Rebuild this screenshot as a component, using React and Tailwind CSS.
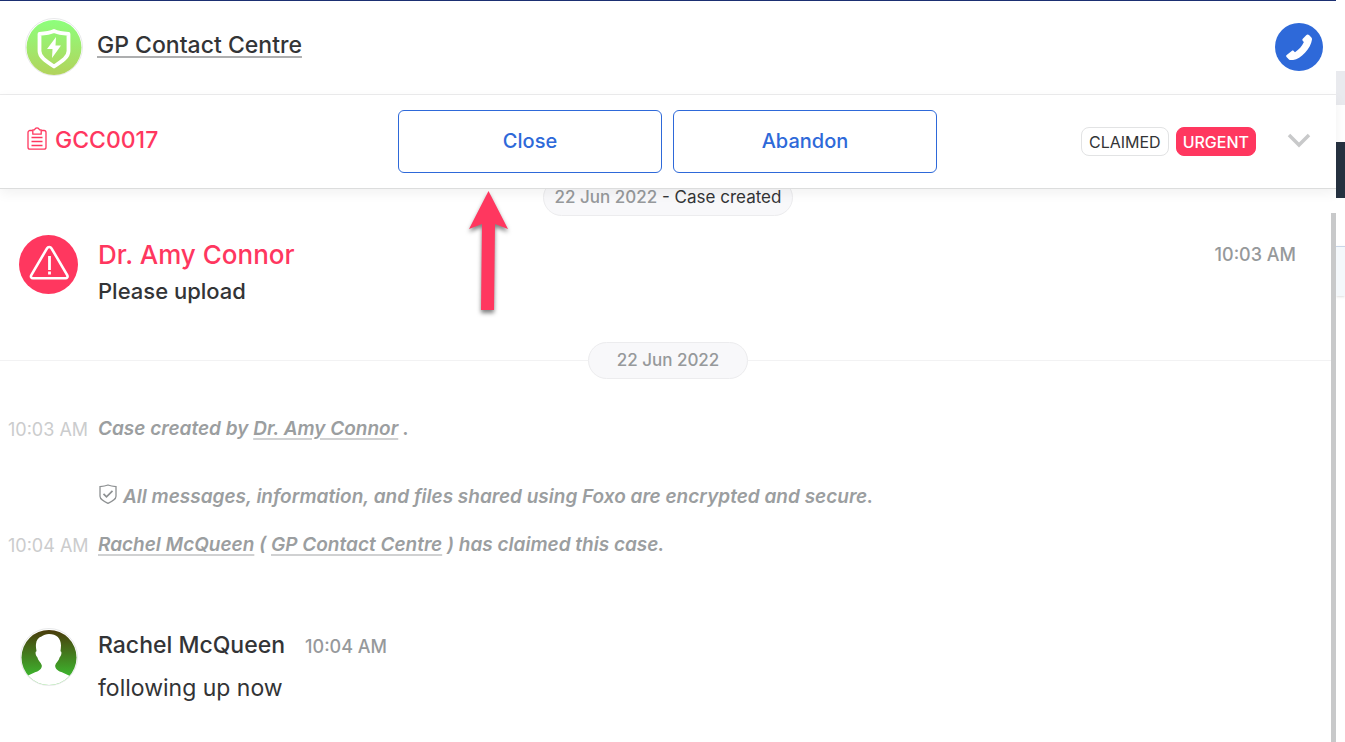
import React from "react";

const PINK = "#ff375f";

function TeamBadge() {
  return (
    <svg viewBox="0 0 58 58" className="size-[58px] shrink-0" aria-hidden="true">
      <defs>
        <linearGradient id="team" x1="0" y1="0" x2="0" y2="1">
          <stop offset="0" stopColor="#8dff7c" />
          <stop offset="1" stopColor="#b2d35c" />
        </linearGradient>
      </defs>
      <circle cx="29" cy="29" r="28.500" fill="#fff" stroke="#e8e9ea" />
      <circle cx="29" cy="29.500" r="27.500" fill="url(#team)" />
      <path
        d="M29 13c4.500 2 9.500 2.500 14.500 2.900V33c0 6-6 10-14.500 15.500C20.500 43 14.500 39 14.500 33V15.900c5-.4 10-.9 14.500-2.900z"
        fill="none"
        stroke="#fff"
        strokeWidth="3.800"
        strokeLinejoin="round"
      />
      <path d="M31 19l-9 12h5.500L27 40l9-12.500h-5.500z" fill="#fff" />
    </svg>
  );
}

function PhoneIcon() {
  return (
    <svg viewBox="0 0 48 48" className="size-12" aria-hidden="true">
      <path
        d="M31.200 12.200c.8-.9 1.900-1 2.800-.2l2.200 2.200c.6.600.9 1.400.8 2.300-.6 4.500-3 8.900-7 13.200-3.800 4-7.800 6.600-11.800 7.300-1.200.2-2.200.1-3.200-.1l-.8-.2-2.700-2.800c-.6-.6-.5-1.300.2-1.800l5-4.200c.7-.5 1.400-.5 2 .1l1.300 1.300c4-2.600 7-6.200 8.900-10.200l-1.100-1.200c-.6-.7-.6-1.400 0-2.100z"
        fill="#fff"
      />
    </svg>
  );
}

function ClipboardIcon() {
  return (
    <svg
      viewBox="0 0 20 23"
      className="mb-1 h-[23px] w-5 shrink-0"
      fill="none"
      stroke={PINK}
      strokeWidth="1.300"
      strokeLinejoin="round"
      aria-hidden="true"
    >
      <path d="M5.500 3.500H3A2 2 0 0 0 1 5.500v14.700a2 2 0 0 0 2 2h14a2 2 0 0 0 2-2V5.500a2 2 0 0 0-2-2h-2.500" />
      <path d="M5.800 2.800h1.700C8 1.500 8.900.8 10 .8s2 .7 2.500 2h1.700v4.400H5.800z" />
      <path d="M4.500 10.500h11M4.500 14.500h11M4.500 18.500h11" />
    </svg>
  );
}

function AlertAvatar() {
  return (
    <svg viewBox="0 0 59 59" className="size-[59px] shrink-0" aria-hidden="true">
      <circle cx="29.500" cy="29.500" r="29.500" fill={PINK} />
      <path
        d="M28 13.300L12.300 40.200c-.9 1.600 0 3 1.700 3h32.500c1.700 0 2.600-1.400 1.700-3L32.500 13.300c-1-1.800-3.500-1.800-4.500 0z"
        fill="none"
        stroke="#fff"
        strokeWidth="2.600"
        strokeLinejoin="round"
      />
      <path d="M30.500 21v14M30.500 36.500v3" stroke="#fff" strokeWidth="2.800" />
    </svg>
  );
}

function PersonAvatar() {
  return (
    <svg viewBox="0 0 58 58" className="size-[58px] shrink-0" aria-hidden="true">
      <defs>
        <linearGradient id="person" x1="0" y1="0" x2="0" y2="1">
          <stop offset="0" stopColor="#4a350a" />
          <stop offset="0.850" stopColor="#3db92f" />
          <stop offset="1" stopColor="#3dc433" />
        </linearGradient>
        <clipPath id="personClip">
          <circle cx="29" cy="29.500" r="27.500" />
        </clipPath>
      </defs>
      <circle cx="29" cy="29" r="28.500" fill="#fff" stroke="#e8e9ea" />
      <g clipPath="url(#personClip)">
        <rect width="58" height="58" fill="url(#person)" />
        <path
          d="M29 6c7.500 0 12 4.300 12 11.500 0 2-.4 4-.5 5.800 1.500.3 1.200 3.800-.8 6-.8 3.500-4 5.700-4.500 8.200-.3 3 3 5.500 6.200 6.600L50 48v11H7V48l8.600-3.900c3.200-1.100 6.500-3.600 6.200-6.600-.5-2.500-3.700-4.700-4.500-8.200-2-2.200-2.300-5.700-.8-6-.1-1.800-.9-4-.5-7.300.4-4 2.200-6.500 5.500-7.500C23.500 7 26 6 29 6z"
          fill="#fff"
        />
      </g>
    </svg>
  );
}

function ShieldCheck() {
  return (
    <svg
      viewBox="0 0 18 20"
      className="mr-1.5 ml-px inline-block h-5 w-[18px] align-[-1px]"
      fill="none"
      stroke="#8e9193"
      strokeWidth="1.300"
      aria-hidden="true"
    >
      <path d="M9 1c2.500 1 5 1.400 8 1.600v9.600c0 3-3.500 4.800-8 7.100-4.500-2.300-8-4.100-8-7.100V2.600C4 2.400 6.500 2 9 1z" />
      <path d="M4.500 9.800l3 3L13.500 6.800" strokeWidth="1.700" />
    </svg>
  );
}

function PointerArrow() {
  return (
    <svg
      viewBox="0 0 50 132"
      className="pointer-events-none absolute top-[79px] left-[65px] h-[132px] w-[50px]"
      aria-hidden="true"
    >
      <path
        d="M25.500 2L45 40l-13-5L31 121H18l1-86-13 5z"
        fill={PINK}
        style={{ filter: "drop-shadow(0 3px 2px rgba(0,0,0,0.5))" }}
      />
    </svg>
  );
}

function UserLink({ children }) {
  return (
    <a href="#" className="underline decoration-[#d0d1d2] decoration-2 underline-offset-3">
      {children}
    </a>
  );
}

function SystemMessage({ time, children }) {
  return (
    <div className="flex h-7 items-center">
      <time className="w-[98px] shrink-0 pl-2 text-[18px] text-[#cbcccd]">{time}</time>
      <p className="text-[19px] font-semibold text-[#9b9ea0] italic">{children}</p>
    </div>
  );
}

export default function App() {
  return (
    <div className="flex h-screen overflow-hidden bg-white font-['Inter','Liberation_Sans',sans-serif] text-[#333436]">
      <main className="flex min-w-0 flex-1 flex-col border-t border-[#1b2f72]">
        {/* Team header */}
        <header className="flex h-[94px] shrink-0 items-center justify-between border-b border-[#ececed] pr-[13px] pb-0.5 pl-[25px]">
          <div className="flex items-center gap-3.5">
            <TeamBadge />
            <h1 className="pb-0.5 text-[23px] font-medium">
              <a href="#" className="underline decoration-[#adaeaf] decoration-2 underline-offset-3">
                GP Contact Centre
              </a>
            </h1>
          </div>
          <button aria-label="Call" className="size-12 rounded-full bg-[#2e69d9]">
            <PhoneIcon />
          </button>
        </header>

        {/* Case bar */}
        <section className="relative z-10 grid h-[94px] shrink-0 grid-cols-[1fr_auto_1fr] items-center border-b border-[#dcdddd] bg-white pr-[25px] pl-6 shadow-[0_4px_12px_rgba(0,0,0,0.06)]">
          <h2 className="flex items-center gap-2 pb-0.5 pl-[3px] text-[23px] font-medium text-[#ff375f]">
            <ClipboardIcon />
            GCC0017
          </h2>
          <div className="relative flex gap-[11px] text-[20px] font-medium text-[#2e69d9]">
            <button className="h-[63px] w-[264px] rounded-md border border-[#2e69d9] pb-0.5">Close</button>
            <button className="h-[63px] w-[264px] rounded-md border border-[#2e69d9] pb-0.5">Abandon</button>
            <PointerArrow />
          </div>
          <div className="flex items-center justify-end text-[16px] leading-[25px]">
            <span className="mr-[7px] rounded-lg border border-[#e2e3e4] px-[7px] pt-0.5">CLAIMED</span>
            <span className="rounded-lg border border-[#ff375f] bg-[#ff375f] px-1.5 pt-0.5 font-medium text-white">
              URGENT
            </span>
            <button aria-label="Show case details" className="ml-[31px] pb-1">
              <svg viewBox="0 0 24 16" className="h-4 w-6" fill="none" stroke="#c8c9ca" strokeWidth="3.500">
                <path d="M2 3l10 10L22 3" />
              </svg>
            </button>
          </div>
        </section>

        {/* Conversation */}
        <section className="relative min-h-0 flex-1">
          <div className="-mt-2.5 flex justify-center">
            <p className="h-[37px] rounded-full border border-[#ececee] bg-[#f8f8fa] px-[11px] pt-[9px] text-[17px] leading-[17px]">
              <time className="font-medium text-[#96999b]">22 Jun 2022</time> - Case created
            </p>
          </div>

          <article className="mt-[19px] flex gap-5 pr-10 pl-[19px]">
            <AlertAvatar />
            <div className="flex-1">
              <div className="flex h-[38px] items-center justify-between">
                <h3 className="text-[26px] font-medium text-[#ff375f]">Dr. Amy Connor</h3>
                <time className="text-[18px] font-medium text-[#96999b]">10:03 AM</time>
              </div>
              <p className="text-[22px] leading-9 font-medium">Please upload</p>
            </div>
          </article>

          <div className="mt-[33px] flex items-center">
            <span className="h-px flex-1 bg-[#f2f2f3]" />
            <time className="h-[37px] rounded-full border border-[#ececee] bg-[#f8f8fa] px-7 text-[17px] leading-[35px] font-medium text-[#96999b]">
              22 Jun 2022
            </time>
            <span className="h-px flex-1 bg-[#f2f2f3]" />
          </div>

          <div className="mt-9">
            <SystemMessage time="10:03 AM">
              Case created by <UserLink>Dr. Amy Connor</UserLink> .
            </SystemMessage>
          </div>
          <div className="mt-10">
            <SystemMessage>
              <ShieldCheck />
              All messages, information, and files shared using Foxo are encrypted and secure.
            </SystemMessage>
          </div>
          <div className="mt-5">
            <SystemMessage time="10:04 AM">
              <UserLink>Rachel McQueen</UserLink> ( <UserLink>GP Contact Centre</UserLink> ) has claimed this case.
            </SystemMessage>
          </div>

          <article className="mt-[69px] flex gap-5 pl-5">
            <PersonAvatar />
            <div>
              <div className="flex h-[34px] items-center gap-5">
                <h3 className="text-[23px] font-medium">Rachel McQueen</h3>
                <time className="pt-0.5 text-[18px] font-medium text-[#96999b]">10:04 AM</time>
              </div>
              <p className="mt-2 text-[23px] leading-9">following up now</p>
            </div>
          </article>

          {/* Scroll thumb */}
          <div className="absolute top-6 right-0 bottom-0 w-[5px] bg-[#c8c9ca]" />
        </section>
      </main>

      {/* Edge of the panel behind the conversation */}
      <div className="w-[9px] shrink-0">
        <div className="mt-[71px] h-[34px] bg-[#e9eaee]" />
        <div className="mt-[37px] h-14 bg-[#263241]" />
        <div className="mt-12 h-[50px] border-t border-[#c9d6e8] bg-[#f4f8fb] shadow-sm" />
      </div>
    </div>
  );
}
